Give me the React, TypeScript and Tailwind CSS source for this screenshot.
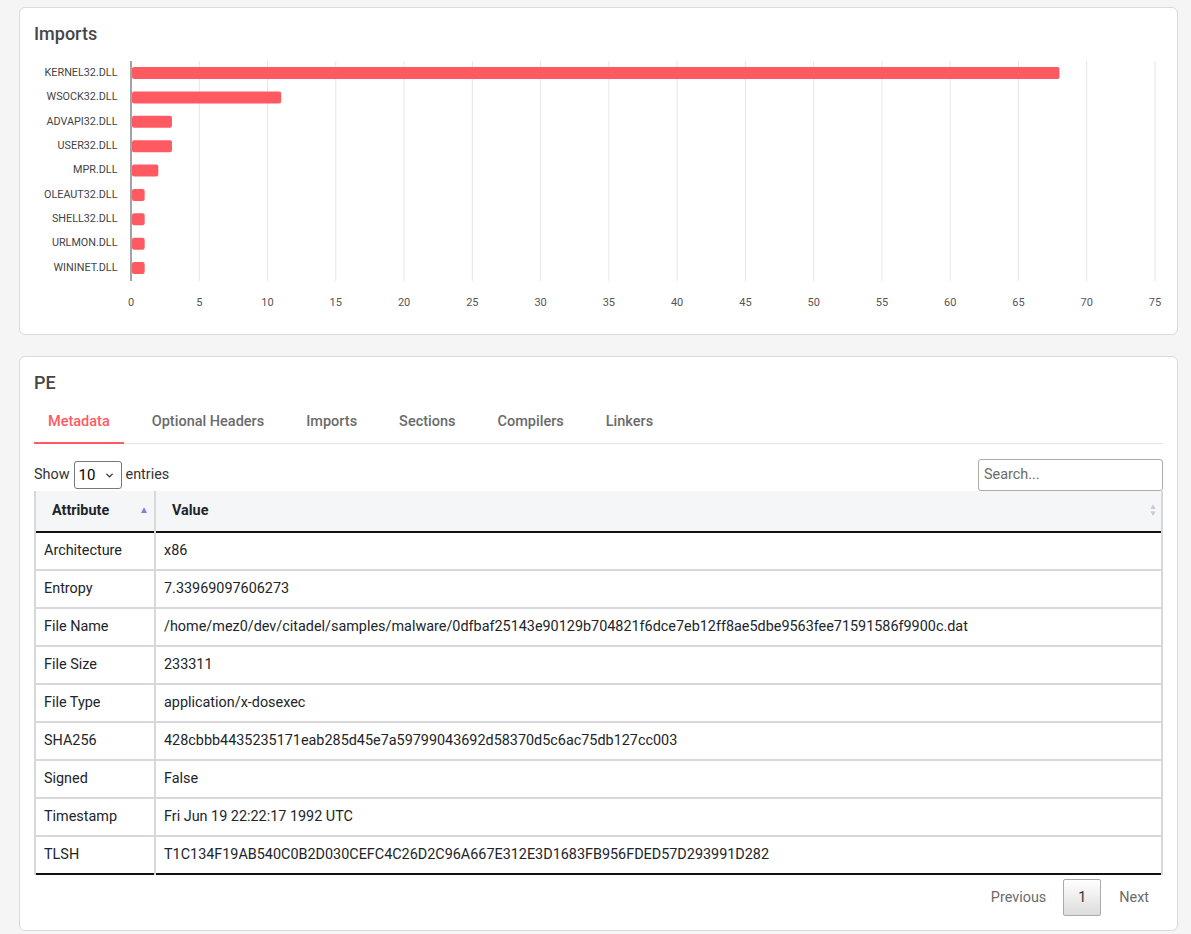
import { ChevronDown } from "lucide-react";

const imports = [
  { name: "KERNEL32.DLL", count: 68 },
  { name: "WSOCK32.DLL", count: 11 },
  { name: "ADVAPI32.DLL", count: 3 },
  { name: "USER32.DLL", count: 3 },
  { name: "MPR.DLL", count: 2 },
  { name: "OLEAUT32.DLL", count: 1 },
  { name: "SHELL32.DLL", count: 1 },
  { name: "URLMON.DLL", count: 1 },
  { name: "WININET.DLL", count: 1 },
];

const metadata = [
  ["Architecture", "x86"],
  ["Entropy", "7.33969097606273"],
  [
    "File Name",
    "/home/mez0/dev/citadel/samples/malware/0dfbaf25143e90129b704821f6dce7eb12ff8ae5dbe9563fee71591586f9900c.dat",
  ],
  ["File Size", "233311"],
  ["File Type", "application/x-dosexec"],
  ["SHA256", "428cbbb4435235171eab285d45e7a59799043692d58370d5c6ac75db127cc003"],
  ["Signed", "False"],
  ["Timestamp", "Fri Jun 19 22:22:17 1992 UTC"],
  ["TLSH", "T1C134F19AB540C0B2D030CEFC4C26D2C96A667E312E3D1683FB956FDED57D293991D282"],
];

const tabs = ["Metadata", "Optional Headers", "Imports", "Sections", "Compilers", "Linkers"];

function ImportsChart() {
  const x0 = 97;
  const unit = 1024 / 75;
  const ticks = Array.from({ length: 16 }, (_, i) => i * 5);

  return (
    <svg width="1130" height="282" className="block" style={{ fontFamily: "Roboto, sans-serif" }}>
      {ticks.map((t) => (
        <g key={t}>
          {t > 0 && (
            <line x1={x0 + t * unit} x2={x0 + t * unit} y1={15} y2={235} stroke="#e6e6e6" strokeWidth="1" />
          )}
          <text x={x0 + t * unit} y={257} fontSize="11" fill="#555" textAnchor="middle" dominantBaseline="middle">
            {t}
          </text>
        </g>
      ))}
      <line x1={x0} x2={x0} y1={15} y2={235} stroke="#666" strokeWidth="1.2" />
      {imports.map((d, i) => {
        const cy = 27 + i * 24.375;
        return (
          <g key={d.name}>
            <text x={83.5} y={cy} fontSize="10.8" fill="#444" textAnchor="end" dominantBaseline="middle">
              {d.name}
            </text>
            <rect x={x0 + 1} y={cy - 6} width={d.count * unit - 1} height={12} rx={2} fill="#ff5a62" />
          </g>
        );
      })}
    </svg>
  );
}

export default function App() {
  return (
    <div className="min-h-[934px] bg-[#f5f5f5] pt-[7px] pl-[19px] pr-[13px] pb-[4px] font-['Roboto',sans-serif]">
      {/* chart card */}
      <div className="bg-white border border-[#dadada] rounded-md pt-[14px] px-[14px] pb-[6px]">
        <h2 className="text-[18px] leading-[24px] font-medium text-[#464646]">Imports</h2>
        <ImportsChart />
      </div>

      {/* PE card */}
      <div className="mt-[21px] bg-white border border-[#dadada] rounded-md pt-[14px] px-[14px] pb-[14px]">
        <h2 className="text-[18px] leading-[24px] font-medium text-[#464646]">PE</h2>

        <div className="flex gap-[14px] border-b border-[#e6e6e6]">
          {tabs.map((t, i) => (
            <div
              key={t}
              className={
                i === 0
                  ? "px-[14px] pt-[17px] pb-[10px] text-[14.5px] leading-[20px] font-medium text-[#ff5a62] border-b-2 border-[#ff5a62] -mb-px"
                  : "px-[14px] pt-[17px] pb-[10px] text-[14.5px] leading-[20px] font-medium text-[#6b6b6b]"
              }
            >
              {t}
            </div>
          ))}
        </div>

        <div className="flex items-center justify-between mt-[15px] text-[14.4px] text-[#333]">
          <div className="flex items-center gap-[4px]">
            <span>Show</span>
            <div className="flex items-center justify-between w-[48px] h-[28px] border border-[#777] rounded-[3px] pl-[4px] pr-[6px] text-[15px] text-black">
              <span>10</span>
              <ChevronDown size={11} strokeWidth={3} className="text-[#333]" />
            </div>
            <span>entries</span>
          </div>
          <div className="w-[185px] h-[32px] border border-[#aaa] rounded-[3px] flex items-center px-[5px] text-[14.4px] text-[#6b6b6b]">
            Search...
          </div>
        </div>

        <table className="w-full border-collapse text-[14.4px] text-[#212529]">
          <thead>
            <tr className="bg-[#f5f6f8] border-b-2 border-[#111]">
              <th className="relative w-[120px] h-[41px] text-left font-bold pl-[16px] border-l-2 border-[#d6d8db]">
                Attribute
                <span className="absolute right-[5px] top-[11px] text-[10px] text-[#7d7fe0]">▲</span>
              </th>
              <th className="relative h-[41px] text-left font-bold pl-[16px] border-x-2 border-[#d6d8db]">
                Value
                <span className="absolute right-[4px] top-[12px] flex flex-col leading-[7px] text-[8px] text-[#c9cacd]">
                  <span>▲</span>
                  <span>▼</span>
                </span>
              </th>
            </tr>
          </thead>
          <tbody>
            {metadata.map(([k, v], i) => (
              <tr key={k} className={i === metadata.length - 1 ? "border-b-2 border-[#111]" : "border-b-2 border-[#d6d8db]"}>
                <td className="h-[38px] pl-[8px] border-x-2 border-[#d6d8db]">{k}</td>
                <td className="h-[38px] pl-[8px] border-x-2 border-[#d6d8db]">{v}</td>
              </tr>
            ))}
          </tbody>
        </table>

        <div className="flex items-center justify-end mt-[4px] text-[14.4px] text-[#6b6b6b]">
          <span className="pl-[14px] pr-[17px]">Previous</span>
          <span className="w-[38px] h-[37px] flex items-center justify-center border border-[#aaa] rounded-[2px] bg-gradient-to-b from-white to-[#dcdcdc] text-[#333]">
            1
          </span>
          <span className="pl-[18px] pr-[14px]">Next</span>
        </div>
      </div>
    </div>
  );
}
